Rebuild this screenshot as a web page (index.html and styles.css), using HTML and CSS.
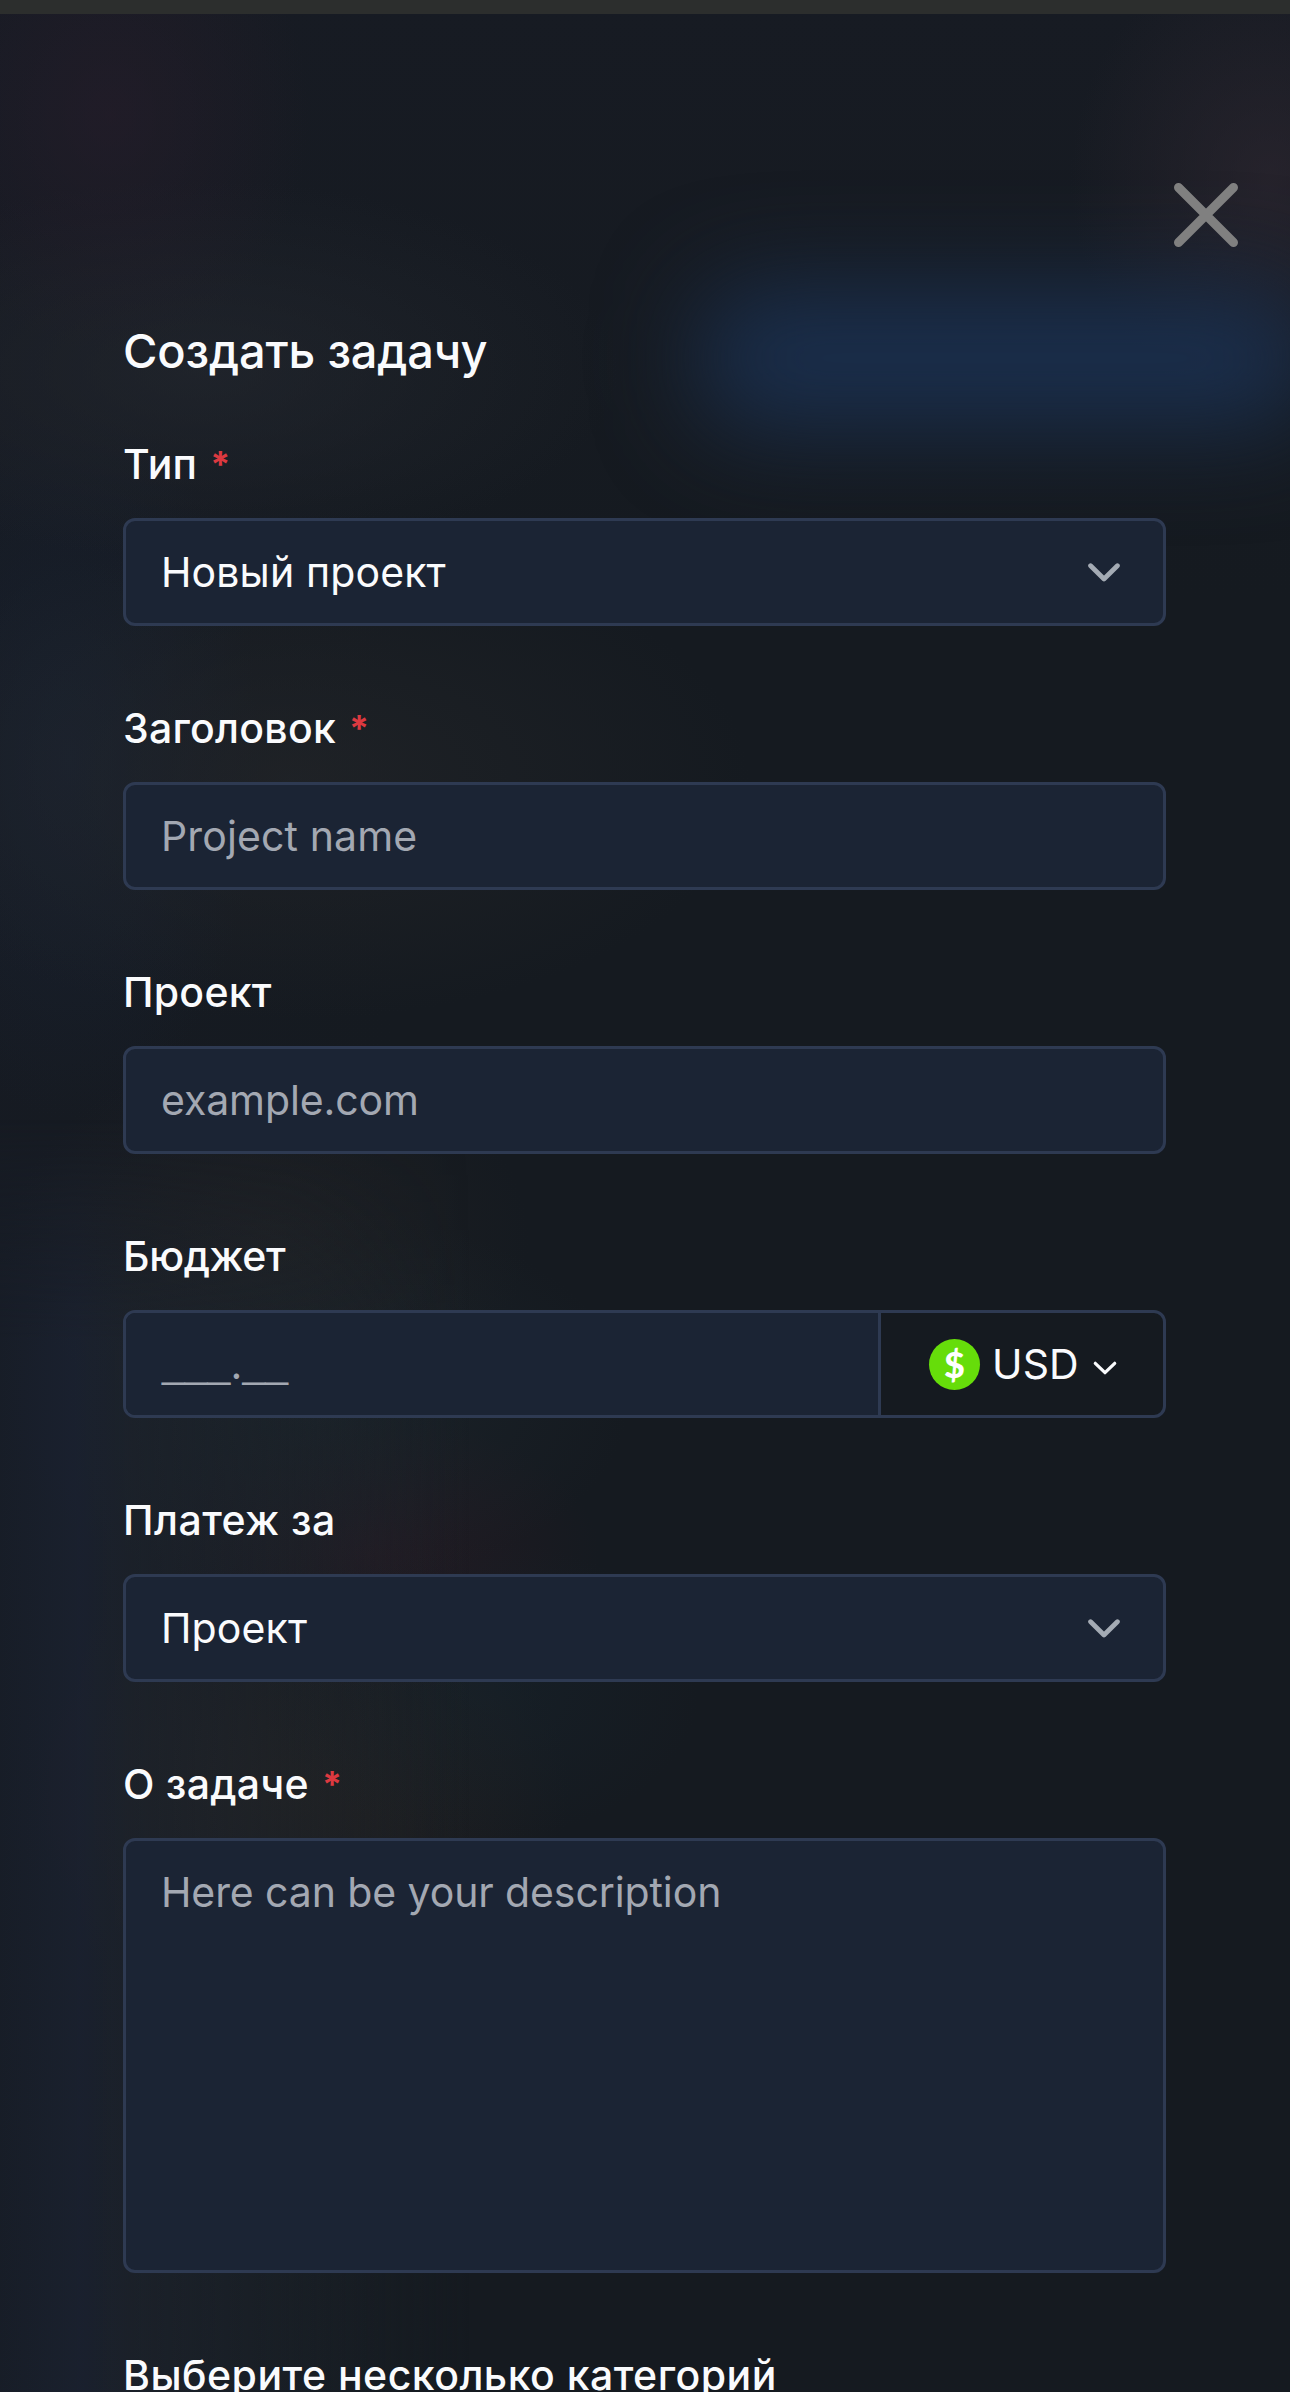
FILE: index.html
```html
<!DOCTYPE html>
<html lang="ru">
<head>
<meta charset="utf-8">
<title>Создать задачу</title>
<link rel="stylesheet" href="styles.css">
</head>
<body>
<div class="screen">
  <div class="backdrop"><div class="rail"></div><div class="glow"></div></div>
  <div class="statusbar"></div>
  <header class="header">
    <svg class="close" viewBox="0 0 64 64"><path d="M4.5 4.5 59.5 59.5M59.5 4.5 4.5 59.5"/></svg>
  </header>
  <main class="form">
    <h1 class="title">Создать задачу</h1>

    <section class="group">
      <div class="label type">Тип<span class="req">*</span></div>
      <div class="field select"><span class="value">Новый проект</span>
        <svg class="chevron" viewBox="0 0 32 19"><path d="M2.6 2.8 16 16 29.4 2.8"/></svg></div>
    </section>

    <section class="group">
      <div class="label">Заголовок<span class="req">*</span></div>
      <div class="field"><span class="placeholder">Project name</span></div>
    </section>

    <section class="group">
      <div class="label">Проект</div>
      <div class="field"><span class="placeholder latin">example.com</span></div>
    </section>

    <section class="group">
      <div class="label budget">Бюджет</div>
      <div class="field split">
        <div class="amount"><span class="placeholder"><span class="mask">___</span>.<span class="mask">__</span></span></div>
        <div class="currency">
          <span class="coin">$</span>
          <span class="value code">USD</span>
          <svg class="caret" viewBox="0 0 24 14"><path d="M2.3 2.3 12 11.7 21.7 2.3"/></svg>
        </div>
      </div>
    </section>

    <section class="group">
      <div class="label payment">Платеж за</div>
      <div class="field select"><span class="value">Проект</span>
        <svg class="chevron" viewBox="0 0 32 19"><path d="M2.6 2.8 16 16 29.4 2.8"/></svg></div>
    </section>

    <section class="group">
      <div class="label">О задаче<span class="req">*</span></div>
      <div class="field area"><span class="placeholder latin">Here can be your description</span></div>
    </section>

    <section class="group">
      <div class="label categories">Выберите несколько категорий</div>
    </section>
  </main>
</div>
</body>
</html>
```
FILE: styles.css
```css
* { box-sizing: border-box; }
body { margin: 0; background: #151a20; font-family: Inter, "Noto Sans", sans-serif; }

.screen { position: relative; height: 2392px; overflow: hidden; color: #fafbfd; }
.backdrop {
  position: absolute; inset: 0; z-index: -1; overflow: hidden;
  background:
    radial-gradient(200px 240px at 110px 115px, rgba(42,29,44,.5), transparent),
    radial-gradient(200px 230px at 1270px 180px, rgba(48,40,50,.6), transparent),
    radial-gradient(420px 190px at 200px 370px, rgba(35,39,46,.7), transparent),
    radial-gradient(460px 240px at 290px 780px, rgba(37,39,42,.6), transparent),
    radial-gradient(260px 190px at 270px 1240px, rgba(40,38,38,.45), transparent),
    radial-gradient(320px 190px at 310px 1400px, rgba(32,43,50,.5), transparent),
    radial-gradient(230px 140px at 370px 1555px, rgba(46,26,36,.55), transparent),
    radial-gradient(220px 150px at 480px 1690px, rgba(23,38,48,.4), transparent),
    radial-gradient(290px 220px at 280px 1790px, rgba(48,40,35,.55), transparent),
    radial-gradient(190px 360px at 70px 760px, rgba(25,36,54,.6), transparent),
    linear-gradient(90deg, rgba(23,27,36,.6), transparent 400px),
    linear-gradient(#171b23, transparent 600px),
    #151a20;
}
.rail {
  position: absolute; left: 0; top: 1120px; width: 470px; height: 1400px;
  background: linear-gradient(90deg, rgba(24,30,41,.8), rgba(27,34,49,.8) 75px, rgba(29,35,44,.75) 130px, rgba(28,35,42,.5) 290px, transparent);
  -webkit-mask-image: linear-gradient(transparent, #000 220px);
  mask-image: linear-gradient(transparent, #000 220px);
}
.glow {
  position: absolute; left: 700px; top: 290px; width: 610px; height: 136px;
  border-radius: 50px; background: #1a2f4e; filter: blur(50px);
}
.statusbar { height: 14px; background: #2c2e2d; }
.header { height: 307px; padding: 169px 52px 0 0; display: flex; justify-content: flex-end; align-items: flex-start; }
.close { width: 64px; height: 64px; fill: none; stroke: #808080; stroke-width: 9; stroke-linecap: round; }

.form { width: 1043px; margin-left: 123px; }
.title { margin: 0 0 53px; font-size: 47px; line-height: 60px; font-weight: 500; letter-spacing: -.17px; }
.group { margin-bottom: 72px; }
.label { height: 60px; margin-bottom: 24px; font-size: 41px; line-height: 60px; font-weight: 500; letter-spacing: .25px; white-space: nowrap; }
.label.type { letter-spacing: .2px; }
.label.budget { letter-spacing: -.37px; }
.label.payment { letter-spacing: .45px; }
.label.categories { letter-spacing: .48px; }
.req { position: relative; top: -2px; margin-left: 13px; font-size: 36px; font-weight: 700; line-height: 1; letter-spacing: 0; color: #dc3940; }

.field {
  display: flex; align-items: center; height: 108px; padding: 0 43px 0 35px;
  border: 3px solid #2e3a52; border-radius: 12px; background: #1b2434;
  font-size: 41px; line-height: 60px; letter-spacing: .13px;
}
.select { justify-content: space-between; }
.placeholder { color: #a3a8b2; }
.latin { letter-spacing: -.1px; }
.chevron { width: 32px; height: 19px; fill: none; stroke: #a4abb4; stroke-width: 4.8; stroke-linecap: round; stroke-linejoin: round; }
.area { height: 435px; align-items: flex-start; padding-top: 21px; }

.split { padding: 0; background: none; }
.amount { flex: 1; height: 100%; padding: 21px 36px; border-radius: 9px 0 0 9px; background: #1b2434; line-height: 60px; }
.mask { position: relative; top: -2px; font-family: "Liberation Sans", sans-serif; line-height: 1; letter-spacing: 0; }
.currency { width: 285px; height: 100%; padding-left: 48px; border-left: 3px solid #2e3a52; display: flex; align-items: center; }
.coin {
  width: 51px; height: 51px; border-radius: 50%; background: #66dd0a; color: #fff;
  font: 900 36px/51px Lato, sans-serif; letter-spacing: 0; text-align: center;
}
.code { margin-left: 12px; }
.caret { width: 24px; height: 14px; margin: 7px 0 0 14px; fill: none; stroke: #fafbfd; stroke-width: 3.2; stroke-linecap: round; stroke-linejoin: round; }
```
